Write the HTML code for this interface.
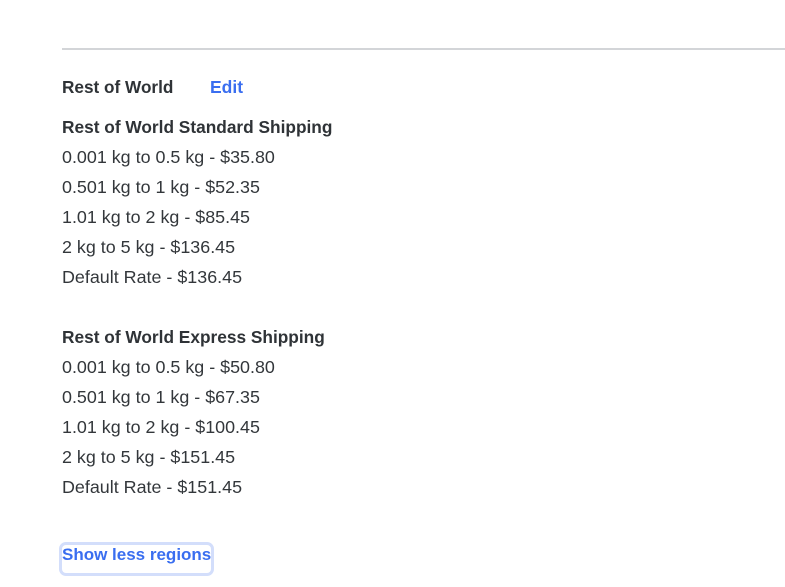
<!DOCTYPE html>
<html><head><style>
html,body{margin:0;padding:0;background:#fff;width:785px;height:587px;overflow:hidden;font-family:"Liberation Sans",sans-serif;color:#2f3337;}
.hr{position:absolute;left:62px;top:48px;width:723px;height:2px;background:#d3d5d8;}
.t{position:absolute;left:62px;font-size:17.9px;line-height:20px;white-space:nowrap;color:#33373b;}
.b{font-weight:bold;font-size:17.3px;color:#2f3337;}
.blue{color:#3a6ef0;}
.ring{position:absolute;left:59px;top:542px;width:149px;height:28px;border:3px solid #d3defb;border-radius:7px;}
</style></head><body>
<div class="hr"></div>
<div class="t b" style="top:77px;font-size:17.2px">Rest of World</div>
<div class="t b blue" style="top:77px;left:210px;font-size:17.5px">Edit</div>
<div class="t b" style="top:117px">Rest of World Standard Shipping</div>
<div class="t" style="top:147px">0.001 kg to 0.5 kg - $35.80</div>
<div class="t" style="top:177px">0.501 kg to 1 kg - $52.35</div>
<div class="t" style="top:207px">1.01 kg to 2 kg - $85.45</div>
<div class="t" style="top:237px">2 kg to 5 kg - $136.45</div>
<div class="t" style="top:267px">Default Rate - $136.45</div>
<div class="t b" style="top:327px">Rest of World Express Shipping</div>
<div class="t" style="top:357px">0.001 kg to 0.5 kg - $50.80</div>
<div class="t" style="top:387px">0.501 kg to 1 kg - $67.35</div>
<div class="t" style="top:417px">1.01 kg to 2 kg - $100.45</div>
<div class="t" style="top:447px">2 kg to 5 kg - $151.45</div>
<div class="t" style="top:477px">Default Rate - $151.45</div>
<div class="ring"></div>
<div class="t b blue" style="top:545px;font-size:17px">Show less regions</div>
</body></html>
